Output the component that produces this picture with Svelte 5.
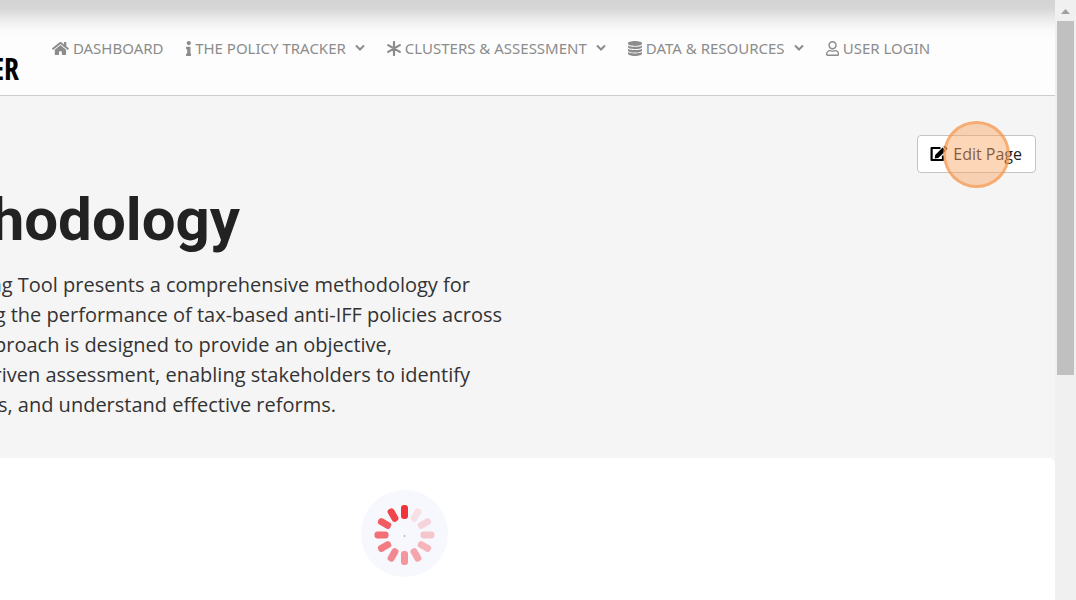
<script>
    const menu = [
        { label: 'DASHBOARD', icon: 'home', dropdown: false },
        { label: 'THE POLICY TRACKER', icon: 'info', dropdown: true },
        { label: 'CLUSTERS & ASSESSMENT', icon: 'asterisk', dropdown: true },
        { label: 'DATA & RESOURCES', icon: 'database', dropdown: true },
        { label: 'USER LOGIN', icon: 'user', dropdown: false },
    ];

    // Visible part of each line, the start is cut off by the left window edge
    const intro = [
        { text: 'ng Tool presents a comprehensive methodology for', end: 470 },
        { text: 'g the performance of tax-based anti-IFF policies across', end: 502 },
        { text: 'proach is designed to provide an objective,', end: 392 },
        { text: 'riven assessment, enabling stakeholders to identify', end: 470 },
        { text: 's, and understand effective reforms.', end: 336 },
    ];

    // Clockwise from the top
    const spokes = [1, 0.13, 0.18, 0.25, 0.34, 0.42, 0.5, 0.57, 0.64, 0.7, 0.8, 0.92];
</script>


<style>
    :global(body) {
        margin: 0;
        overflow: hidden;
        background: #ffffff;
    }

    .window {
        display: flex;
        height: 100vh;
        font-family: 'Open Sans', 'Noto Sans', sans-serif;
        color: #222222;
    }

    .page {
        flex: 1;
        min-width: 0;
        overflow: hidden;
        background: #f5f5f5;
    }

    header {
        display: flex;
        align-items: flex-start;
        gap: 33px;
        box-sizing: border-box;
        height: 96px;
        border-bottom: 1px solid #cccccc;
        background: linear-gradient(#d4d4d4 0, #d6d6d6 8px, #ececec 20px, #fafafa 30px, #fdfdfd 40px);
    }

    .brand {
        display: flex;
        justify-content: flex-end;
        width: 19px;
        margin-top: 49px;
        overflow: hidden;
        font: bold 30px/40px 'Open Sans Condensed', 'Roboto Condensed', 'Liberation Sans Narrow', 'Open Sans', sans-serif;
        color: #000000;
        text-decoration: none;
    }

    nav {
        display: flex;
        gap: 22px;
        margin-top: 38px;
    }

    nav a {
        display: flex;
        align-items: center;
        gap: 4px;
        font-family: 'Noto Sans', 'Open Sans', sans-serif;
        font-size: 15px;
        line-height: 20px;
        color: #8c8c8c;
        white-space: nowrap;
        text-decoration: none;
    }

    nav svg {
        height: 15px;
        fill: currentColor;
    }

    nav .chevron {
        width: 10px;
        height: 10px;
        margin-left: 5px;
        fill: none;
        stroke: currentColor;
        stroke-width: 2;
    }

    .hero {
        padding: 39px 19px 38px 0;
    }

    .tools {
        display: flex;
        justify-content: flex-end;
    }

    .edit {
        position: relative;
        display: flex;
        align-items: center;
        gap: 5px;
        height: 38px;
        padding: 0 13px 0 12px;
        border: 1px solid #c4c4c4;
        border-radius: 4px;
        background: #ffffff;
        font: 16px/24px 'Open Sans', 'Noto Sans', sans-serif;
        color: #222222;
    }

    .edit svg {
        width: 18px;
        height: 16px;
    }

    .pointer {
        position: absolute;
        top: -15px;
        left: 25px;
        box-sizing: border-box;
        width: 67px;
        height: 67px;
        border: 3px solid rgba(243, 146, 70, 0.6);
        border-radius: 50%;
        background: rgba(250, 165, 95, 0.45);
    }

    h1,
    .line {
        display: flex;
        justify-content: flex-end;
        margin: 0;
        white-space: nowrap;
    }

    h1 {
        width: 240px;
        margin: 11px 0 14px;
        font: bold 60px/72px Roboto, sans-serif;
    }

    .intro {
        margin: 0;
        font-size: 20px;
        line-height: 30px;
        color: #333333;
    }

    .content {
        display: flex;
        min-height: 100%;
        padding: 32px 0 0 361px;
        border-radius: 0 6px 0 0;
        background: #ffffff;
    }

    .spinner {
        width: 87px;
        height: 87px;
    }

    .scrollbar {
        display: flex;
        flex-direction: column;
        align-items: center;
        width: 21px;
        background: #f0f0f0;
    }

    .scrollbar svg {
        width: 21px;
        height: 21px;
    }

    .thumb {
        width: 17px;
        height: 59%;
        background: #c0c0c0;
    }
</style>


<div class="window">
    <div class="page">
        <header>
            <a class="brand" href="#home">ER</a>

            <nav>
                {#each menu as item}
                <a href="#{item.icon}">
                    {#if item.icon === 'home'}
                    <svg viewBox="0 0 576 512"><path d="M280.37 148.26L96 300.11V464a16 16 0 0 0 16 16l112.06-.29a16 16 0 0 0 15.92-16V368a16 16 0 0 1 16-16h64a16 16 0 0 1 16 16v95.64a16 16 0 0 0 16 16.05L464 480a16 16 0 0 0 16-16V300L295.67 148.26a12.19 12.19 0 0 0-15.3 0zM571.6 251.47L488 182.56V44.05a12 12 0 0 0-12-12h-56a12 12 0 0 0-12 12v72.61L318.47 43a48 48 0 0 0-61 0L4.34 251.47a12 12 0 0 0-1.6 16.9l25.5 31A12 12 0 0 0 45.15 301l235.22-193.74a12.19 12.19 0 0 1 15.3 0L530.9 301a12 12 0 0 0 16.9-1.6l25.5-31a12 12 0 0 0-1.7-16.93z" /></svg>
                    {:else if item.icon === 'info'}
                    <svg viewBox="0 0 192 512"><path d="M20 424.229h20V279.771H20c-11.046 0-20-8.954-20-20V212c0-11.046 8.954-20 20-20h112c11.046 0 20 8.954 20 20v212.229h20c11.046 0 20 8.954 20 20V492c0 11.046-8.954 20-20 20H20c-11.046 0-20-8.954-20-20v-47.771c0-11.046 8.954-20 20-20zM96 0C56.235 0 24 32.235 24 72s32.235 72 72 72 72-32.235 72-72S135.764 0 96 0z" /></svg>
                    {:else if item.icon === 'asterisk'}
                    <svg viewBox="0 0 14 15"><path d="M7 1v13M1.2 4.1l11.6 6.8M12.8 4.1L1.2 10.9" fill="none" stroke="currentColor" stroke-width="2.2" stroke-linecap="round" /></svg>
                    {:else if item.icon === 'database'}
                    <svg viewBox="0 0 14 15"><path d="M0 2.2C0 1 3 0 7 0s7 1 7 2.2v.6C14 4 11 4.9 7 4.9S0 4 0 2.8zM0 4.4c1.5 1 4 1.4 7 1.4s5.5-.4 7-1.4v1.7C14 7.3 11 8.2 7 8.2S0 7.3 0 6.1zM0 7.7c1.5 1 4 1.4 7 1.4s5.5-.4 7-1.4v1.7c0 1.2-3 2.1-7 2.1s-7-.9-7-2.1zM0 11c1.5 1 4 1.4 7 1.4s5.5-.4 7-1.4v1.8c0 1.2-3 2.2-7 2.2s-7-1-7-2.2z" /></svg>
                    {:else}
                    <svg viewBox="0 0 448 512"><path d="M313.6 304c-28.7 0-42.5 16-89.6 16-47.1 0-60.8-16-89.6-16C60.2 304 0 364.2 0 438.4V464c0 26.5 21.5 48 48 48h352c26.5 0 48-21.5 48-48v-25.6c0-74.2-60.2-134.4-134.4-134.4zM400 464H48v-25.6c0-47.6 38.8-86.4 86.4-86.4 14.6 0 38.3 16 89.6 16 51.7 0 74.9-16 89.6-16 47.6 0 86.4 38.8 86.4 86.4V464zM224 288c79.5 0 144-64.5 144-144S303.5 0 224 0 80 64.5 80 144s64.5 144 144 144zm0-240c52.9 0 96 43.1 96 96s-43.1 96-96 96-96-43.1-96-96 43.1-96 96-96z" /></svg>
                    {/if}
                    {item.label}
                    {#if item.dropdown}
                    <svg class="chevron" viewBox="0 0 10 10"><path d="M1 2.5l4 4 4-4" /></svg>
                    {/if}
                </a>
                {/each}
            </nav>
        </header>

        <section class="hero">
            <div class="tools">
                <button class="edit">
                    <svg viewBox="0 0 18 16">
                        <path d="M10.5 2H1.6v12h11.4V9.5" fill="none" stroke="#000000" stroke-width="2.2" stroke-linejoin="round" />
                        <path d="M5.2 9L12.6 1.6l3.1 3.1-7.4 7.4-3.6.5zM13.4.8l.7-.6c.4-.3.9-.3 1.3 0l1.7 1.7c.4.4.4.9 0 1.3l-.7.7z" />
                    </svg>
                    Edit Page
                    <span class="pointer"></span>
                </button>
            </div>

            <h1>hodology</h1>

            <p class="intro">
                {#each intro as line}
                <span class="line" style="width: {line.end}px">{line.text}</span>
                {/each}
            </p>
        </section>

        <main class="content">
            <svg class="spinner" viewBox="0 0 87 87" role="img" aria-label="Loading">
                <circle cx="43.5" cy="43.5" r="43.5" fill="#f7f8fe" />
                {#each spokes as opacity, i}
                <rect x="40" y="15" width="7" height="14" rx="3" fill="#ef353b" {opacity} transform="rotate({i * 30} 43.5 45)" />
                {/each}
                <circle cx="43.5" cy="46" r="1" fill="#b8b8c0" />
            </svg>
        </main>
    </div>

    <div class="scrollbar">
        <svg viewBox="0 0 21 21"><path d="M6 14l4.5-5 4.5 5z" fill="#a0a0a0" /></svg>
        <div class="thumb"></div>
    </div>
</div>
